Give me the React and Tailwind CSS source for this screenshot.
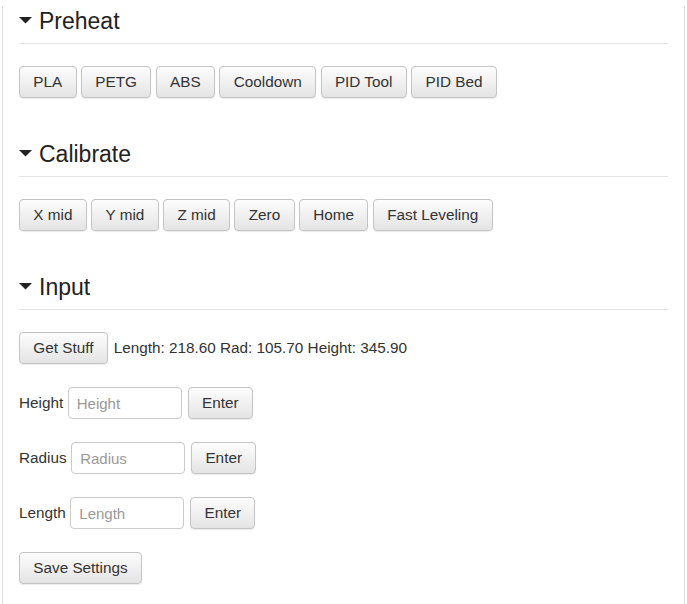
import React from 'react';

const font = { fontFamily: '"Liberation Sans", Arial, sans-serif' };

const Btn = ({ children }) => (
  <button
    type="button"
    className="h-8 px-[13.3px] py-[5px] text-[15.3px] leading-5 text-[#333] border border-[#c4c4c4] rounded-[4px] bg-gradient-to-b from-[#fdfdfd] to-[#e4e4e4] shadow-[0_1px_1px_rgba(0,0,0,0.08)] whitespace-nowrap"
  >
    {children}
  </button>
);

const Heading = ({ title, first }) => (
  <div className={`${first ? 'mt-[6px]' : 'mt-[41px]'} flex items-center gap-[7px] pb-[7px] border-b border-[#e5e5e5]`}>
    <svg width="13" height="7" viewBox="0 0 13 7" className="-mt-[1px]">
      <polygon points="0,0 13,0 6.5,6.5" fill="#222" />
    </svg>
    <h2 className="text-[23px] leading-[30px] text-[#222] font-normal">{title}</h2>
  </div>
);

const InputRow = ({ label }) => (
  <div className="mt-[23px] flex items-center text-[15.3px] text-[#333]">
    <span className="mr-[4.5px]">{label}</span>
    <input
      type="text"
      placeholder={label}
      className="h-8 w-[114px] px-2 border border-[#ccc] rounded-[4px] text-[15px] placeholder:text-[#999] outline-none"
    />
    <div className="ml-[6px]">
      <Btn>Enter</Btn>
    </div>
  </div>
);

export default function App() {
  return (
    <div className="bg-white min-h-[604px]" style={font}>
      <div className="ml-[2px] w-[683px] min-h-[604px] border-x border-[#ddd] px-4 pb-5">
        <Heading title="Preheat" first />
        <div className="mt-[22px] flex gap-[4.5px]">
          {['PLA', 'PETG', 'ABS', 'Cooldown', 'PID Tool', 'PID Bed'].map((b) => (
            <Btn key={b}>{b}</Btn>
          ))}
        </div>

        <Heading title="Calibrate" />
        <div className="mt-[22px] flex gap-[4.5px]">
          {['X mid', 'Y mid', 'Z mid', 'Zero', 'Home', 'Fast Leveling'].map((b) => (
            <Btn key={b}>{b}</Btn>
          ))}
        </div>

        <Heading title="Input" />
        <div className="mt-[22px] flex items-center gap-[6px] text-[15.3px] text-[#333]">
          <Btn>Get Stuff</Btn>
          <span>Length: 218.60 Rad: 105.70 Height: 345.90</span>
        </div>
        <InputRow label="Height" />
        <InputRow label="Radius" />
        <InputRow label="Length" />
        <div className="mt-[23px]">
          <Btn>Save Settings</Btn>
        </div>
      </div>
    </div>
  );
}
